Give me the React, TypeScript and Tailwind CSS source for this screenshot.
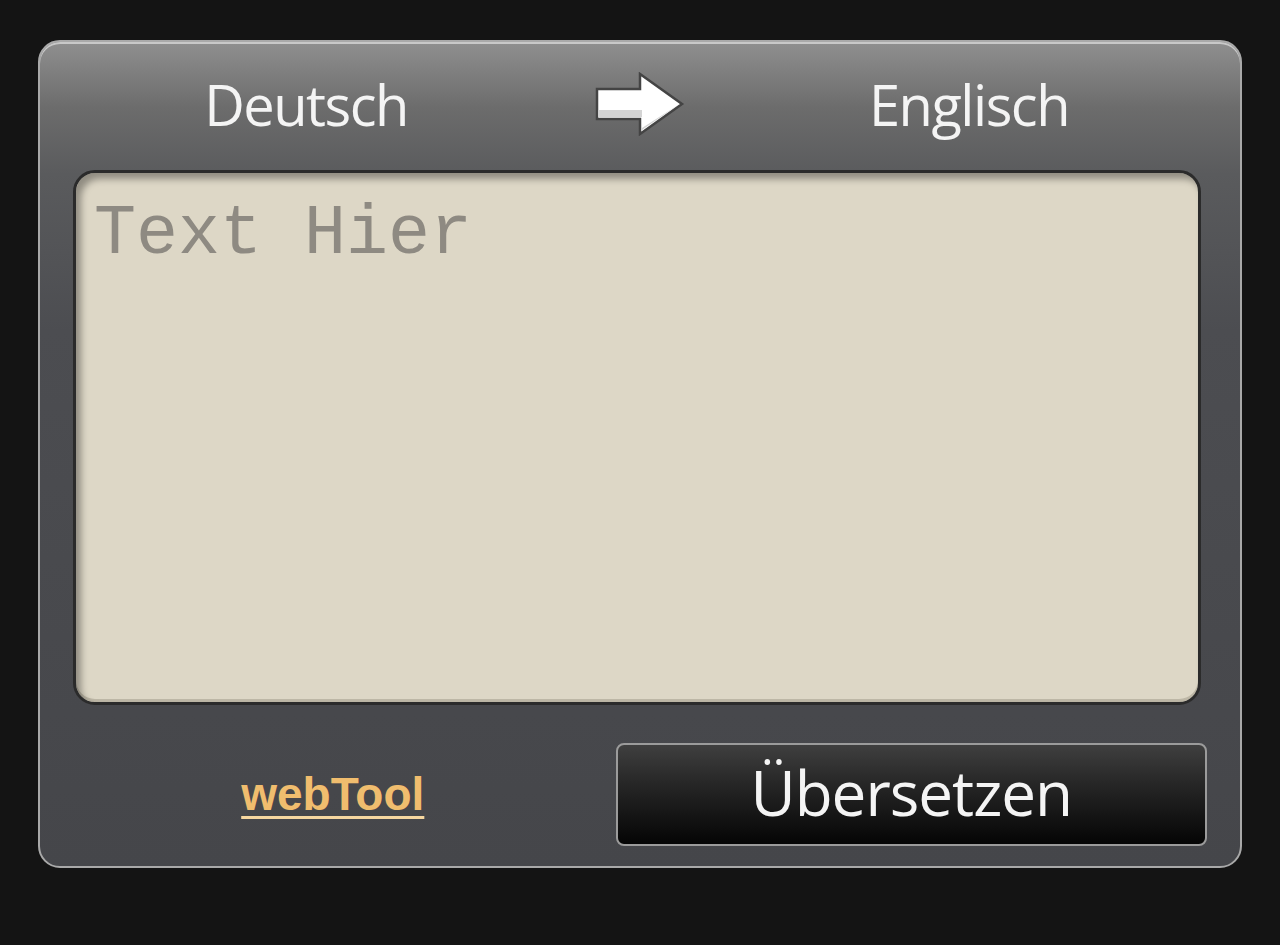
import React from 'react';

const Arrow = () => (
  <svg width="92" height="64" viewBox="0 0 92 64">
    <path
      d="M3 17 H46 V2 L88 32 L46 62 V47 H3 Z"
      fill="#ffffff"
      stroke="#444"
      strokeWidth="2.5"
      strokeLinejoin="miter"
    />
    <path d="M5 38 H48 V56 L84 33 L48 58 V45 H5 Z" fill="#d4d4d4" />
  </svg>
);

export default function App() {
  return (
    <div className="w-[1280px] h-[945px] bg-[#141414] pt-[40px] pl-[38px]">
      <div className="w-[1204px] h-[828px] rounded-[22px] border-2 border-[#a9a9a9] bg-[linear-gradient(to_bottom,#8f8f8f_0%,#6c6c6c_8%,#5a5b5d_16%,#4c4d51_35%,#45464a_100%)] shadow-[inset_0_2px_0_#c8c8c8] flex flex-col">
        <div className="h-[128px] grid grid-cols-[530px_140px_530px] items-center pb-[4px]">
          <div
            className="text-center text-[56px] text-[#f4f4f4] tracking-[-1.5px] pl-[2px]"
            style={{ fontFamily: '"Open Sans", "Noto Sans", sans-serif' }}
          >
            Deutsch
          </div>
          <div className="flex justify-center">
            <Arrow />
          </div>
          <div
            className="text-center text-[56px] text-[#f4f4f4] tracking-[-1.5px] pr-[12px]"
            style={{ fontFamily: '"Open Sans", "Noto Sans", sans-serif' }}
          >
            Englisch
          </div>
        </div>

        <div className="ml-[33px] mr-[39px] h-[535px] rounded-[22px] border-[3px] border-[#2b2b2b] bg-[#ddd7c6] shadow-[inset_5px_6px_7px_rgba(0,0,0,0.35),inset_0_-3px_0_#bdb7a6] overflow-hidden">
          <textarea
            placeholder="Text Hier"
            className="w-full h-full resize-none bg-transparent outline-none px-[18px] pt-[22px] text-[70px] leading-[80px] text-[#555] placeholder:text-[#8e8a82]"
            style={{ fontFamily: '"Liberation Mono", "Courier New", monospace' }}
          />
        </div>

        <div className="flex-1 flex items-center pl-[33px] pr-[33px] pt-[18px]">
          <div className="w-[520px] flex justify-center">
            <a
              href="#"
              className="text-[46px] font-bold text-[#f0bd6e] underline decoration-[3px] decoration-[#f6d7a0] underline-offset-[6px]"
              style={{ fontFamily: '"Liberation Sans", Arial, sans-serif' }}
            >
              webTool
            </a>
          </div>
          <button
            className="ml-[23px] w-[592px] h-[103px] rounded-[8px] border-2 border-[#9b9b9b] bg-[linear-gradient(to_bottom,#3f3f3f_0%,#262626_40%,#050505_100%)] text-[#f4f4f4] text-[62px] tracking-[-1px] flex items-center justify-center pb-[4px]"
            style={{ fontFamily: '"Open Sans", "Noto Sans", sans-serif' }}
          >
            Übersetzen
          </button>
        </div>
      </div>
    </div>
  );
}
